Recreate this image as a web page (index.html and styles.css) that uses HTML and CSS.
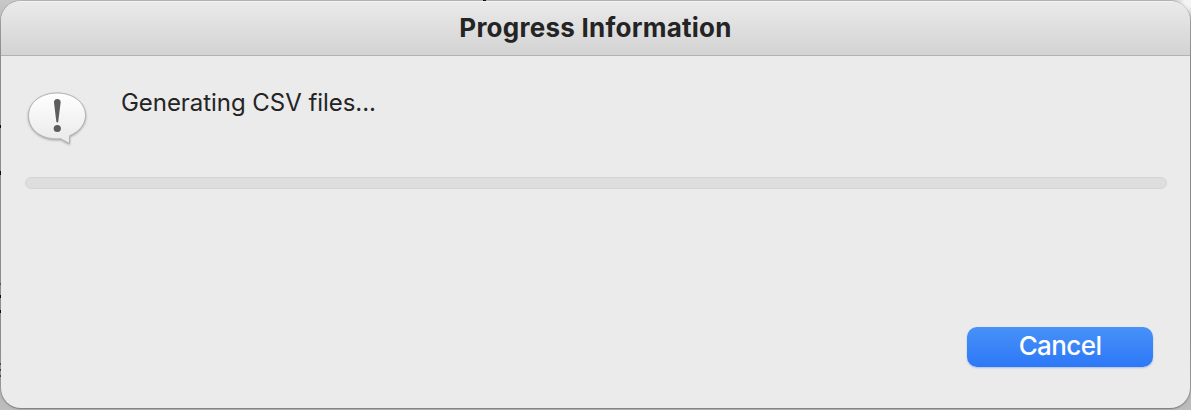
FILE: index.html
```html
<!DOCTYPE html>
<html lang="en">
<head>
<meta charset="utf-8">
<title>Progress Information</title>
<link rel="stylesheet" href="styles.css">
</head>
<body>
<div class="desktop">
  <main class="dialog">
    <header class="titlebar"><h1 class="title">Progress Information</h1></header>
    <section class="content">
      <div class="message-row">
        <svg class="icon" width="66" height="64" viewBox="0 0 66 64" aria-hidden="true">
          <defs>
            <linearGradient id="bubble" x1="0" y1="0" x2="0" y2="1">
              <stop offset="0" stop-color="#ffffff"/>
              <stop offset="1" stop-color="#e9e9e9"/>
            </linearGradient>
          </defs>
          <path class="bubble" d="M32 9C48 9 60.500 18.500 60.500 31.500C60.500 40.500 54 48 44.500 51.800L44.500 59.500L35.500 54.700C17 56.500 3.500 46 3.500 31.500C3.500 18.500 16 9 32 9Z" fill="url(#bubble)"/>
          <path class="mark" d="M32.300 15C30.100 15 28.800 16.300 29 18.500L31.300 37.500C31.500 38.700 33.100 38.700 33.300 37.500L35.600 18.500C35.800 16.300 34.500 15 32.300 15Z"/>
          <circle class="mark" cx="32.300" cy="44.500" r="3.600"/>
        </svg>
        <p class="message">Generating CSV files...</p>
      </div>
      <div class="progress" role="progressbar"></div>
      <div class="actions"><button class="cancel" type="button">Cancel</button></div>
    </section>
  </main>
</div>
</body>
</html>
```
FILE: styles.css
```css
* { box-sizing: border-box; }
body { margin: 0; font-family: Inter, sans-serif; color: #242424; }
.desktop {
  width: 1191px;
  height: 410px;
  padding: 1px 1px 2px;
  overflow: hidden;
  background:
    linear-gradient(#111, #111) 483px 0 / 3px 1px no-repeat,
    linear-gradient(#111, #111) 0 125px / 1px 3px no-repeat,
    linear-gradient(#111, #111) 0 171px / 1px 4px no-repeat,
    linear-gradient(#666, #666) 0 283px / 1px 2px no-repeat,
    linear-gradient(#111, #111) 0 295px / 1px 3px no-repeat,
    linear-gradient(#111, #111) 0 310px / 1px 3px no-repeat,
    linear-gradient(#555, #555) 0 363px / 1px 2px no-repeat,
    linear-gradient(#555, #555) 0 369px / 1px 2px no-repeat,
    linear-gradient(#555, #555) 0 375px / 1px 2px no-repeat,
    radial-gradient(circle at 1191px 0, #f4f4f4 6px, transparent 18px),
    linear-gradient(#c8c8c8, #a8a8a8 55px, #a8a8a8 340px, #bdbdbd);
}
.dialog {
  display: flex;
  flex-direction: column;
  height: 407px;
  border-radius: 20px;
  overflow: hidden;
  background: #ebebeb;
  box-shadow: 0 0 0 1px rgba(0, 0, 0, .09), 0 1px 2px rgba(0, 0, 0, .3);
}
.titlebar {
  display: flex;
  align-items: center;
  justify-content: center;
  height: 55px;
  padding-bottom: 2px;
  border-top: 1px solid #f4f4f4;
  border-bottom: 1px solid #b2b2b2;
  background: linear-gradient(#eaeaea, #d3d3d3);
}
.title { margin: 0; font-size: 26px; font-weight: 700; line-height: 32px; letter-spacing: .25px; white-space: nowrap; }
.content { display: flex; flex-direction: column; padding: 28px 23px 0 24px; }
.message-row { display: flex; height: 93px; gap: 30px; }
.icon { flex: none; }
.bubble { stroke: #b2b2b2; stroke-width: 1; filter: drop-shadow(0 1px 1px rgba(0, 0, 0, .3)); }
.mark { fill: #5d5d5d; }
.message { margin: 3px 0 0; font-size: 24px; line-height: 32px; letter-spacing: -.05px; white-space: nowrap; }
.progress { height: 12px; border: 1px solid #d5d5d5; border-radius: 6px; background: #dedede; }
.actions { display: flex; justify-content: flex-end; padding: 138px 14px 0 0; }
.cancel {
  width: 186px;
  height: 40px;
  padding: 0 0 2px;
  border: 0;
  border-radius: 10px;
  background: linear-gradient(#4791f9, #2d78f6);
  box-shadow: 0 1px 2px rgba(45, 110, 220, .35);
  color: #fff;
  font: 500 26px/38px Inter, sans-serif;
  letter-spacing: -.6px;
}
```
